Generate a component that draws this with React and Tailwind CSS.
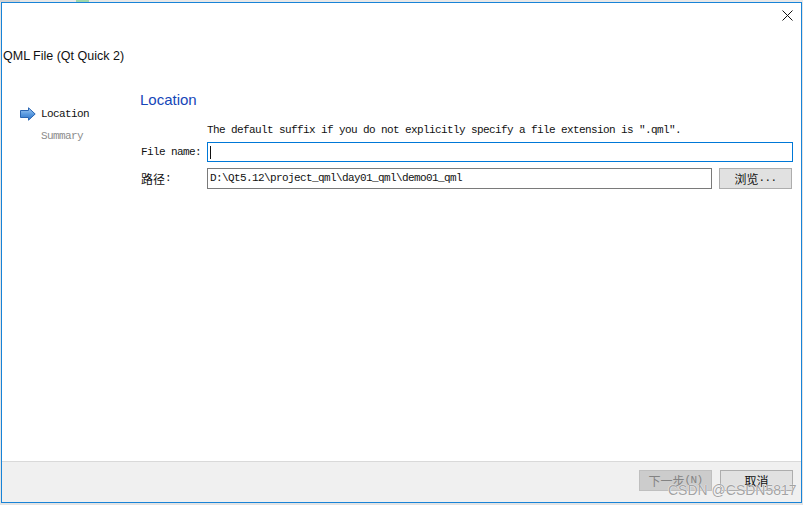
import React from 'react';

const mono = "font-['SimSun','Liberation_Mono','Noto_Sans_CJK_SC',monospace] text-[11px] tracking-[-0.6px]";
const cjk = "font-['Noto_Sans_CJK_SC','Microsoft_YaHei',sans-serif] text-[12px] tracking-normal";

function NavArrow() {
  return (
    <svg width="16" height="14" viewBox="0 0 16 14">
      <defs>
        <linearGradient id="arrowFill" x1="0" y1="0" x2="0" y2="1">
          <stop offset="0" stopColor="#a9cdf3" />
          <stop offset="0.5" stopColor="#5b9be0" />
          <stop offset="1" stopColor="#2f74c8" />
        </linearGradient>
      </defs>
      <path
        d="M0.5 3.5 H8.5 V0.8 L15.2 7 L8.5 13.2 V10.5 H0.5 Z"
        fill="url(#arrowFill)"
        stroke="#2a66b3"
        strokeWidth="1"
        strokeLinejoin="round"
      />
    </svg>
  );
}

function CloseIcon() {
  return (
    <svg width="11" height="11" viewBox="0 0 11 11">
      <path d="M0.5 0.5 L10.5 10.5 M10.5 0.5 L0.5 10.5" stroke="#111" strokeWidth="1" />
    </svg>
  );
}

function WinButton({ children, disabled }) {
  return (
    <div
      className={
        'w-[73px] h-[21px] flex items-center justify-center border ' +
        (disabled
          ? 'bg-[#cccccc] border-[#bfbfbf] text-[#838383]'
          : 'bg-[#e1e1e1] border-[#adadad] text-[#111]')
      }
    >
      {children}
    </div>
  );
}

export default function App() {
  return (
    <div className="w-[803px] h-[505px] bg-[#e4e4e4] overflow-hidden relative">
      {/* strip of the desktop above the dialog */}
      <div className="flex h-[2px]">
        <div className="w-[20px] bg-[#d3d3d3]" />
        <div className="w-[56px] bg-[#e8e8e8]" />
        <div className="w-[13px] bg-[#9fd6aa]" />
        <div className="flex-1 bg-[#e8e8e8]" />
      </div>

      {/* dialog window */}
      <div className="ml-[1px] w-[801px] h-[501px] border border-[#1883d7] bg-white flex flex-col">
        {/* title area */}
        <div className="h-[61px] flex flex-col">
          <div className="flex justify-end pr-[8px] pt-[7px]">
            <CloseIcon />
          </div>
          <div className="mt-[27px] pl-[1px] h-[16px] leading-[16px] text-[12.5px] text-[#111] font-['Segoe_UI','Liberation_Sans',sans-serif]">
            QML File (Qt Quick 2)
          </div>
        </div>

        {/* body */}
        <div className="flex-1 flex">
          <div className="w-[138px] pl-[18px] pt-[42px] flex flex-col">
            <div className="flex items-center gap-[5px] h-[16px]">
              <NavArrow />
              <span className={mono + ' text-[#111]'}>Location</span>
            </div>
            <div className={mono + ' mt-[6px] h-[16px] leading-[16px] pl-[21px] text-[#8c8c8c]'}>
              Summary
            </div>
          </div>

          <div className="flex-1 pt-[26px] pr-[8px] flex flex-col">
            <div className="h-[20px] leading-[20px] text-[15px] text-[#1546b8] font-['Segoe_UI','Liberation_Sans',sans-serif]">
              Location
            </div>
            <div className="mt-[13px] grid grid-cols-[67px_1fr] gap-y-[6px] items-center">
              <div />
              <div className={mono + ' h-[14px] leading-[14px] text-[#111] -mb-[1px]'}>
                The default suffix if you do not explicitly specify a file extension is ".qml".
              </div>

              <div className={mono + ' pl-[1px] text-[#111]'}>File name:</div>
              <div className="h-[20px] border border-[#0078d7] flex items-center pl-[2px]">
                <div className="w-[1px] h-[13px] bg-[#111]" />
              </div>

              <div className="pl-[1px] text-[#111] flex items-center">
                <span className={cjk}>路径</span>
                <span className={mono}>:</span>
              </div>
              <div className="flex gap-[7px] pr-[1px]">
                <div className={mono + ' flex-1 h-[21px] border border-[#7a7a7a] flex items-center pl-[2px] text-[#111]'}>
                  D:\Qt5.12\project_qml\day01_qml\demo01_qml
                </div>
                <div className="w-[73px] h-[21px] bg-[#e1e1e1] border border-[#adadad] flex items-center justify-center text-[#111]">
                  <span className={cjk}>浏览</span>
                  <span className={mono}>...</span>
                </div>
              </div>
            </div>
          </div>
        </div>

        {/* footer */}
        <div className="h-[41px] border-t border-[#d9d9d9] bg-[#f0f0f0] flex justify-end gap-[8px] pt-[8px] pr-[8px]">
          <WinButton disabled>
            <span className={cjk}>下一步</span>
            <span className={mono}>(N)</span>
          </WinButton>
          <WinButton>
            <span className={cjk}>取消</span>
          </WinButton>
        </div>
      </div>

      {/* watermark */}
      <div className="absolute left-[668px] top-[481px] text-[14px] leading-[18px] text-[#a3a3a3] font-['Liberation_Sans',sans-serif] [text-shadow:0_0_1px_#fff,0_0_1px_#fff]">
        CSDN @CSDN5817
      </div>
    </div>
  );
}
